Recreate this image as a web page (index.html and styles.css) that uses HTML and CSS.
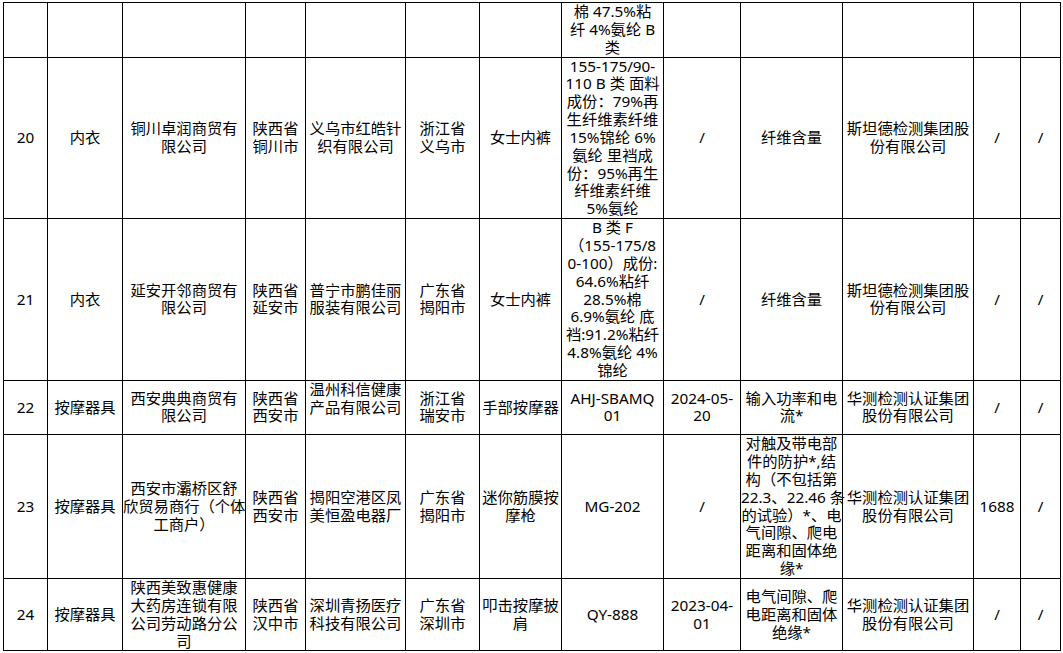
FILE: index.html
```html
<!DOCTYPE html>
<html lang="zh-CN">
<head>
<meta charset="utf-8">
<title>抽查结果</title>
<link rel="stylesheet" href="styles.css">
</head>
<body>
<table class="grid">
  <colgroup>
    <col class="c1"><col class="c2"><col class="c3"><col class="c4"><col class="c5"><col class="c6"><col class="c7"><col class="c8"><col class="c9"><col class="c10"><col class="c11"><col class="c12"><col class="c13">
  </colgroup>
  <tbody>
    <tr>
      <td></td><td></td><td></td><td></td><td></td><td></td><td></td>
      <td class="top">棉 47.5%粘<br>纤 4%氨纶 B<br>类</td>
      <td></td><td></td><td></td><td></td><td></td>
    </tr>
    <tr>
      <td>20</td>
      <td>内衣</td>
      <td>铜川卓润商贸有<br>限公司</td>
      <td>陕西省<br>铜川市</td>
      <td>义乌市红皓针<br>织有限公司</td>
      <td>浙江省<br>义乌市</td>
      <td>女士内裤</td>
      <td>155-175/90-<br>110 B 类 面料<br>成份：79%再<br>生纤维素纤维<br>15%锦纶 6%<br>氨纶 里裆成<br>份：95%再生<br>纤维素纤维<br>5%氨纶</td>
      <td>/</td>
      <td>纤维含量</td>
      <td>斯坦德检测集团股<br>份有限公司</td>
      <td>/</td>
      <td>/</td>
    </tr>
    <tr>
      <td>21</td>
      <td>内衣</td>
      <td>延安开邻商贸有<br>限公司</td>
      <td>陕西省<br>延安市</td>
      <td>普宁市鹏佳丽<br>服装有限公司</td>
      <td>广东省<br>揭阳市</td>
      <td>女士内裤</td>
      <td>B 类 F<br>（155-175/8<br>0-100）成份:<br>64.6%粘纤<br>28.5%棉<br>6.9%氨纶 底<br>裆:91.2%粘纤<br>4.8%氨纶 4%<br>锦纶</td>
      <td>/</td>
      <td>纤维含量</td>
      <td>斯坦德检测集团股<br>份有限公司</td>
      <td>/</td>
      <td>/</td>
    </tr>
    <tr>
      <td>22</td>
      <td>按摩器具</td>
      <td>西安典典商贸有<br>限公司</td>
      <td>陕西省<br>西安市</td>
      <td>温州科信健康<br>产品有限公司<br>&nbsp;</td>
      <td>浙江省<br>瑞安市</td>
      <td>手部按摩器</td>
      <td>AHJ-SBAMQ<br>01</td>
      <td>2024-05-<br>20</td>
      <td>输入功率和电<br>流*</td>
      <td>华测检测认证集团<br>股份有限公司</td>
      <td>/</td>
      <td>/</td>
    </tr>
    <tr>
      <td>23</td>
      <td>按摩器具</td>
      <td>西安市灞桥区舒<br>欣贸易商行（个体<br>工商户）</td>
      <td>陕西省<br>西安市</td>
      <td>揭阳空港区凤<br>美恒盈电器厂</td>
      <td>广东省<br>揭阳市</td>
      <td>迷你筋膜按<br>摩枪</td>
      <td>MG-202</td>
      <td>/</td>
      <td>对触及带电部<br>件的防护*,结<br>构（不包括第<br>22.3、22.46 条<br>的试验）*、电<br>气间隙、爬电<br>距离和固体绝<br>缘*</td>
      <td>华测检测认证集团<br>股份有限公司</td>
      <td>1688</td>
      <td>/</td>
    </tr>
    <tr>
      <td>24</td>
      <td>按摩器具</td>
      <td>陕西美致惠健康<br>大药房连锁有限<br>公司劳动路分公<br>司</td>
      <td>陕西省<br>汉中市</td>
      <td>深圳青扬医疗<br>科技有限公司</td>
      <td>广东省<br>深圳市</td>
      <td>叩击按摩披<br>肩</td>
      <td>QY-888</td>
      <td>2023-04-<br>01</td>
      <td>电气间隙、爬<br>电距离和固体<br>绝缘*</td>
      <td>华测检测认证集团<br>股份有限公司</td>
      <td>/</td>
      <td>/</td>
    </tr>
  </tbody>
</table>
</body>
</html>
```
FILE: styles.css
```css
html, body {
  margin: 0;
  padding: 0;
  background: #ffffff;
}

body {
  font-family: "Noto Sans", "Noto Sans CJK SC", sans-serif;
  font-size: 15.3px;
  color: #000000;
}

.grid {
  margin: 2px 0 0 3px;
  border-collapse: collapse;
  table-layout: fixed;
  width: 1058px;
}

.grid td {
  border: 1px solid #000000;
  padding: 0;
  text-align: center;
  vertical-align: middle;
  line-height: 17.85px;
  white-space: nowrap;
  overflow: visible;
}

.grid td.top {
  vertical-align: top;
}

.c1 { width: 44px; }
.c2 { width: 75px; }
.c3 { width: 123px; }
.c4 { width: 60px; }
.c5 { width: 100px; }
.c6 { width: 74px; }
.c7 { width: 82px; }
.c8 { width: 102px; }
.c9 { width: 77px; }
.c10 { width: 102px; }
.c11 { width: 131px; }
.c12 { width: 47px; }
.c13 { width: 40px; }
```
